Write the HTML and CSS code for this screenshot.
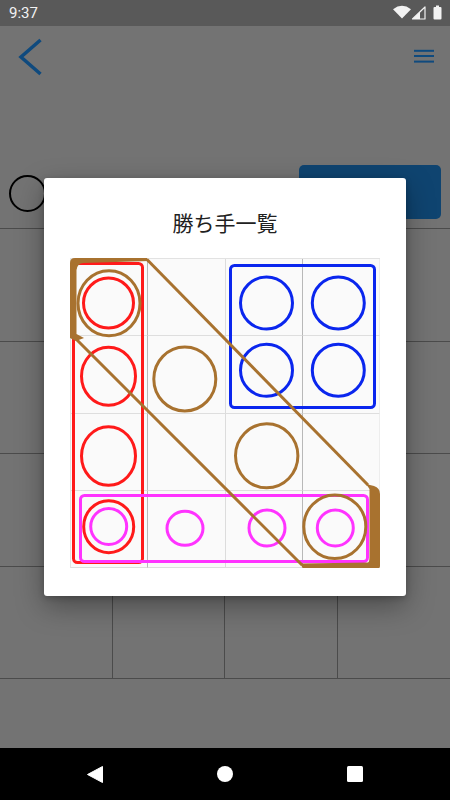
FILE: index.html
```html
<!DOCTYPE html>
<html lang="ja">
<head>
    <meta charset="UTF-8">
    <meta name="viewport" content="width=device-width, initial-scale=1.0">
    <title>勝ち手一覧</title>
    <link rel="stylesheet" href="styles.css">
</head>
<body>
    <div class="phone">
        <div class="status">
            <span class="time">9:37</span>
            <svg class="status-icons" width="50" height="26" viewBox="392 0 50 26">
                <path d="M402,18.5 L393,9.2 Q402,2.5 411,9.2 Z" fill="#f2f2f2"/>
                <path d="M425,7 L425,19 L412.5,19 Z" fill="none" stroke="#f2f2f2" stroke-width="1.2" stroke-linejoin="round"/>
                <path d="M420,12 L420,19 L412.5,19 Z" fill="#f2f2f2"/>
                <rect x="433.5" y="7" width="8" height="12.5" rx="1" fill="#f2f2f2"/>
                <rect x="436" y="5.5" width="3" height="2" fill="#f2f2f2"/>
            </svg>
        </div>

        <div class="toolbar">
            <svg class="back" width="28" height="40" viewBox="0 0 28 40">
                <polyline points="24.5,4 5,21 24.5,38" fill="none" stroke="#0f4a7e" stroke-width="3.5"/>
            </svg>
            <svg class="menu" width="20" height="14" viewBox="0 0 20 14">
                <rect x="0" y="0.8" width="20" height="2" fill="#0f4a7e"/>
                <rect x="0" y="6" width="20" height="2" fill="#0f4a7e"/>
                <rect x="0" y="11.6" width="20" height="2" fill="#0f4a7e"/>
            </svg>
        </div>

        <div class="turn">
            <span class="mark"></span>
            <span class="turn-btn"></span>
        </div>

        <div class="board">
            <div class="cell"></div><div class="cell"></div><div class="cell"></div><div class="cell"></div>
            <div class="cell"></div><div class="cell"></div><div class="cell"></div><div class="cell"></div>
            <div class="cell"></div><div class="cell"></div><div class="cell"></div><div class="cell"></div>
            <div class="cell"></div><div class="cell"></div><div class="cell"></div><div class="cell"></div>
        </div>

        <div class="spacer"></div>

        <div class="navbar">
            <span class="nav-btn">
                <svg width="16" height="17" viewBox="0 0 16 17"><path d="M15.5,0.5 L15.5,16.5 L0.5,8.5 Z" fill="#fff" stroke="#fff" stroke-linejoin="round"/></svg>
            </span>
            <span class="nav-btn"><span class="home"></span></span>
            <span class="nav-btn"><span class="recent"></span></span>
        </div>

        <div class="dialog">
            <h2 class="dialog-title">勝ち手一覧</h2>
            <div class="wins">
                <div class="wcell"></div><div class="wcell"></div><div class="wcell"></div><div class="wcell"></div>
                <div class="wcell"></div><div class="wcell"></div><div class="wcell"></div><div class="wcell"></div>
                <div class="wcell"></div><div class="wcell"></div><div class="wcell"></div><div class="wcell"></div>
                <div class="wcell"></div><div class="wcell"></div><div class="wcell"></div><div class="wcell"></div>

                <!-- winning lines, drawn in page coordinates -->
                <svg class="wins-overlay" width="310" height="310" viewBox="70 258 310 310">
                    <g fill="none" stroke="#ff1a1a" stroke-width="3">
                        <rect x="73.5" y="263.5" width="69" height="299" rx="4"/>
                        <ellipse cx="108.5" cy="303" rx="25" ry="25"/>
                        <ellipse cx="108.5" cy="376.3" rx="27" ry="29"/>
                        <ellipse cx="108.5" cy="456" rx="27" ry="29.3"/>
                        <ellipse cx="108.7" cy="526.7" rx="25" ry="26"/>
                    </g>
                    <g fill="none" stroke="#0a26ee" stroke-width="3">
                        <rect x="230.5" y="265.5" width="144" height="142" rx="4"/>
                        <circle cx="266.5" cy="303" r="26"/>
                        <circle cx="338.3" cy="303" r="26"/>
                        <circle cx="266.5" cy="370.3" r="26"/>
                        <circle cx="338.3" cy="370.3" r="26"/>
                    </g>
                    <g fill="none" stroke="#ff33ff" stroke-width="3">
                        <rect x="80.5" y="495.5" width="287" height="66" rx="4"/>
                        <circle cx="108.7" cy="526.5" r="18"/>
                        <ellipse cx="185" cy="528.3" rx="18" ry="17"/>
                        <circle cx="267" cy="528" r="18"/>
                        <circle cx="335.3" cy="528" r="18"/>
                    </g>
                    <g fill="none" stroke="#a8722f" stroke-width="3">
                        <ellipse cx="109" cy="303.3" rx="31" ry="32.5"/>
                        <ellipse cx="184.8" cy="379" rx="31" ry="32"/>
                        <ellipse cx="266.7" cy="455.8" rx="31.2" ry="32"/>
                        <ellipse cx="334.8" cy="526.7" rx="31" ry="31.8"/>
                        <line x1="147" y1="259.5" x2="368" y2="485"/>
                        <line x1="75" y1="338" x2="302" y2="565"/>
                    </g>
                    <g fill="#a8722f">
                        <path d="M70,338 L70,263 Q70,258 75,258 L147,258 L149,261 L83,263 Q77,264 76.5,270 L76.5,334 L84,338 L76,341 Z"/>
                        <path d="M300,563.5 L368,562.5 Q369.5,562 369.5,557 L369.5,489 L366,484 L374,486 Q380,488 380,494 L380,566 Q380,568.5 377,568.5 L303,568.5 Z"/>
                    </g>
                </svg>
            </div>
        </div>
    </div>
</body>
</html>
```

FILE: styles.css
```css
body {
    margin: 0;
    padding: 0;
    font-family: Roboto, "Noto Sans CJK JP", sans-serif;
    background-color: #737373;
}
.phone {
    position: relative;
    width: 450px;
    height: 800px;
    display: flex;
    flex-direction: column;
    overflow: hidden;
    background-color: #737373;
}
.status {
    height: 26px;
    flex-shrink: 0;
    display: flex;
    align-items: center;
    justify-content: space-between;
    padding: 0 8px 0 9px;
    background-color: #595959;
}
.time {
    color: #f2f2f2;
    font-size: 15px;
    line-height: 26px;
}
.status-icons {
    display: block;
}
.toolbar {
    height: 60px;
    flex-shrink: 0;
    display: flex;
    align-items: center;
    justify-content: space-between;
    padding: 0 16px;
}
.toolbar svg {
    display: block;
}
.turn {
    height: 54px;
    margin-top: 79px;
    flex-shrink: 0;
    display: flex;
    align-items: flex-start;
    justify-content: space-between;
    padding: 0 9px;
}
.mark {
    width: 37px;
    height: 37px;
    margin-top: 10px;
    box-sizing: border-box;
    border: 2.5px solid #000;
    border-radius: 50%;
}
.turn-btn {
    width: 142px;
    height: 54px;
    border-radius: 5px;
    background-color: #0f4470;
}
.board {
    margin-top: 9px;
    flex-shrink: 0;
    display: grid;
    grid-template-columns: repeat(4, 1fr);
    grid-auto-rows: 112.5px;
    border-top: 1px solid #4b4b4b;
}
.cell {
    border-right: 1px solid #4b4b4b;
    border-bottom: 1px solid #4b4b4b;
}
.cell:nth-child(4n) {
    border-right: none;
}
.spacer {
    flex: 1;
}
.navbar {
    height: 52px;
    flex-shrink: 0;
    display: flex;
    align-items: center;
    justify-content: center;
    background-color: #000;
}
.nav-btn {
    width: 130px;
    display: flex;
    align-items: center;
    justify-content: center;
}
.nav-btn svg {
    display: block;
}
.home {
    width: 16px;
    height: 16px;
    border-radius: 50%;
    background-color: #fff;
}
.recent {
    width: 16px;
    height: 16px;
    border-radius: 1.5px;
    background-color: #fff;
}

/* dialog */
.dialog {
    position: absolute;
    top: 178px;
    left: 44px;
    width: 362px;
    height: 418px;
    box-sizing: border-box;
    padding: 29px 26px 28px;
    background: #fff;
    border-radius: 3px;
    box-shadow: 0 10px 28px rgba(0, 0, 0, 0.35), 0 2px 6px rgba(0, 0, 0, 0.2);
}
.dialog-title {
    margin: 0;
    font-family: "Noto Sans CJK JP", sans-serif;
    font-size: 21px;
    font-weight: 400;
    line-height: 30px;
    text-align: center;
    color: #212121;
}
.wins {
    position: relative;
    margin-top: 21px;
    width: 310px;
    height: 310px;
    display: grid;
    grid-template-columns: repeat(4, 1fr);
    grid-template-rows: repeat(4, 1fr);
    box-sizing: border-box;
    border-top: 1px solid #e2e2e2;
    border-left: 1px solid #e2e2e2;
}
.wcell {
    background-color: #fafafa;
    border-right: 1px solid #b8b8b8;
    border-bottom: 1px solid #dedede;
}
.wcell:nth-child(4n+2) {
    border-right-color: #dcdcdc;
}
.wcell:nth-child(4n) {
    border-right-color: #ededed;
}
.wins-overlay {
    position: absolute;
    top: -1px;
    left: -1px;
}
```
